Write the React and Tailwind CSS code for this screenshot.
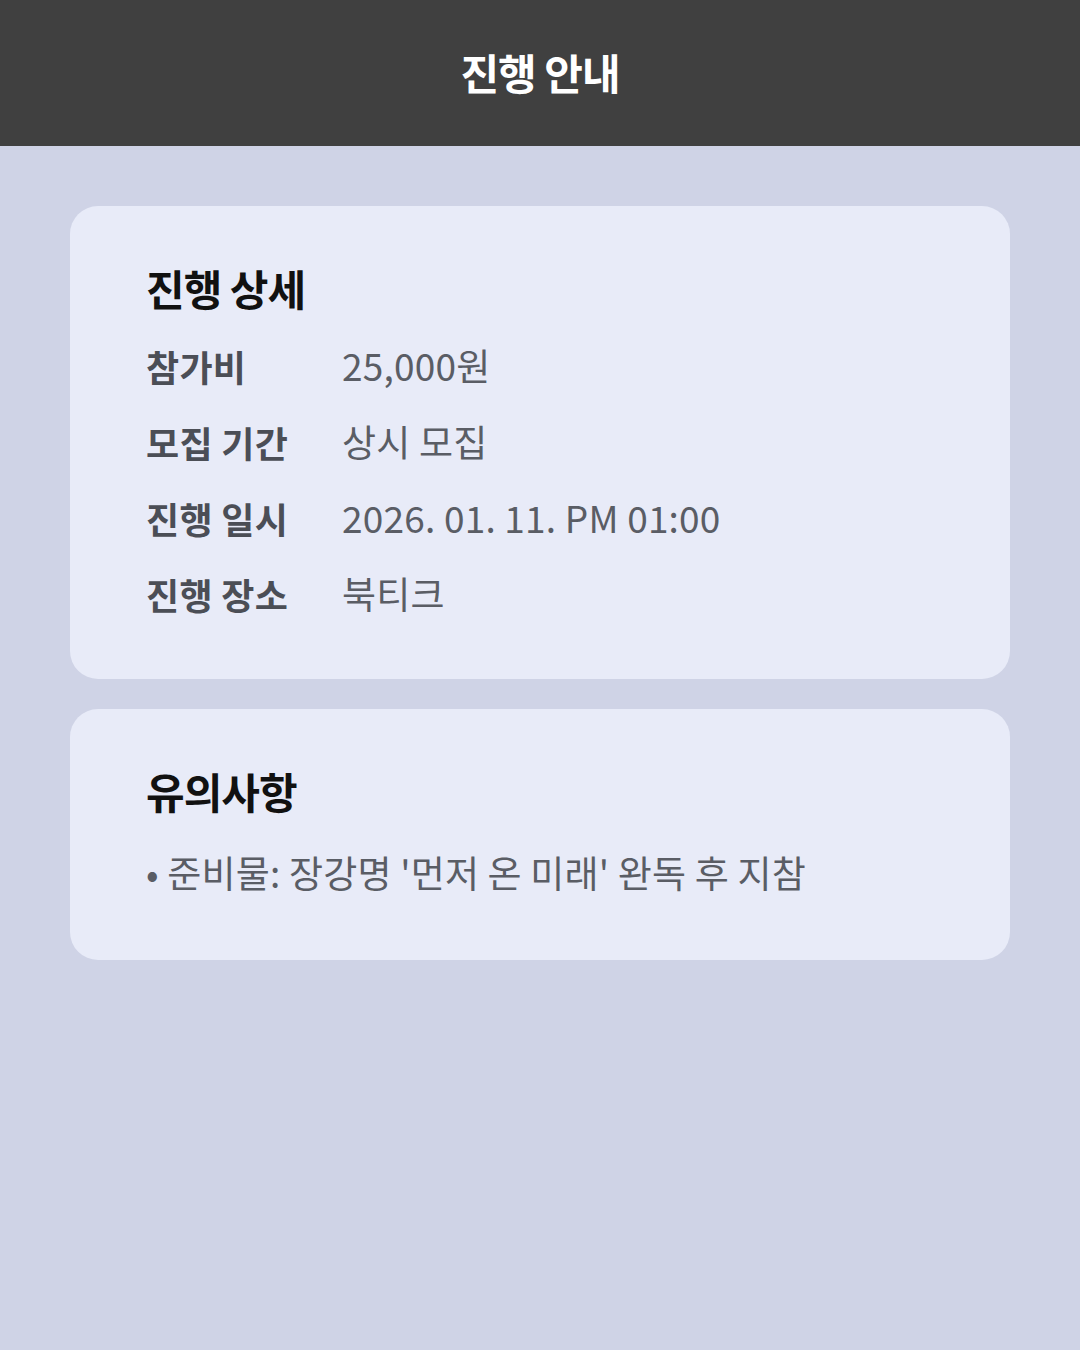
import React from 'react';

const details = [
  { label: '참가비', value: '25,000원' },
  { label: '모집 기간', value: '상시 모집' },
  { label: '진행 일시', value: '2026. 01. 11. PM 01:00' },
  { label: '진행 장소', value: '북티크' },
];

const font = { fontFamily: '"Noto Sans CJK KR", "Noto Sans", sans-serif' };

const App = () => {
  return (
    <div className="w-[1080px] h-[1350px] bg-[#cfd3e6] flex flex-col" style={font}>
      {/* Header */}
      <header className="h-[146px] bg-[#404040] flex items-center justify-center shrink-0">
        <h1 className="text-[42px] font-bold text-white tracking-[-1px] -mt-[4px]">진행 안내</h1>
      </header>

      <main className="flex flex-col gap-[30px] px-[70px] pt-[60px]">
        {/* Details card */}
        <section className="bg-[#e8ebf8] rounded-[28px] px-[76px] pt-[54px] pb-[47px]">
          <h2 className="text-[42px] leading-[56px] font-bold text-[#111] tracking-[-1px]">진행 상세</h2>
          <div className="mt-[12px] flex flex-col">
            {details.map((row) => (
              <div key={row.label} className="flex items-center h-[76px]">
                <span className="w-[196px] shrink-0 text-[36px] font-bold text-[#4b4e56] tracking-[0.3px]">{row.label}</span>
                <span className="text-[37px] text-[#5a5d65] tracking-[0.2px]">{row.value}</span>
              </div>
            ))}
          </div>
        </section>

        {/* Notes card */}
        <section className="bg-[#e8ebf8] rounded-[28px] px-[76px] pt-[54px] pb-[49px]">
          <h2 className="text-[42px] leading-[56px] font-bold text-[#111] tracking-[-1px]">유의사항</h2>
          <p className="mt-[16px] h-[76px] flex items-center text-[37px] text-[#5a5d65] tracking-[0.2px]">
            • 준비물: 장강명 '먼저 온 미래' 완독 후 지참
          </p>
        </section>
      </main>
    </div>
  );
};

export default App;
